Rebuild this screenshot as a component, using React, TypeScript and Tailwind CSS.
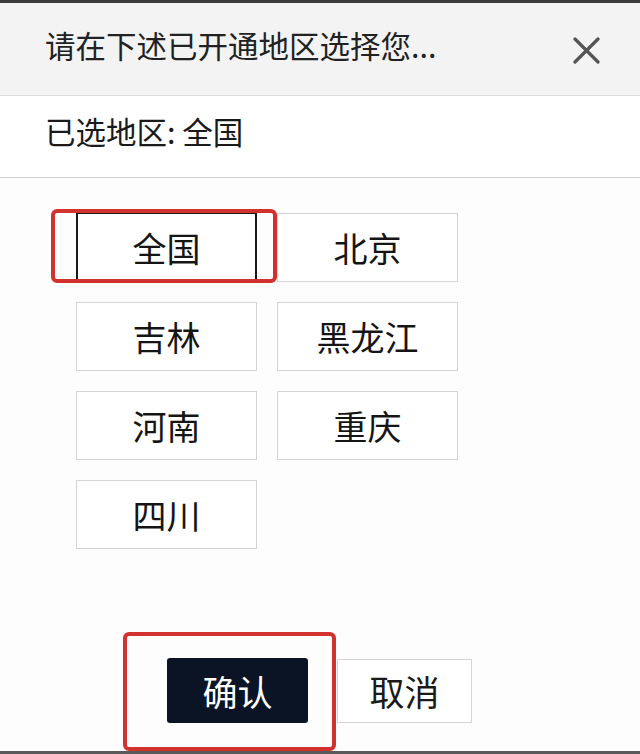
const regions = ["全国", "北京", "吉林", "黑龙江", "河南", "重庆", "四川"];

const App = () => {
  const selected = "全国";

  return (
    <div
      className="w-[640px] h-[754px] flex flex-col bg-[#fdfdfd] text-[#151515] overflow-hidden"
      style={{ fontFamily: '"Noto Sans CJK SC", "Noto Sans", sans-serif' }}
    >
      <div className="h-[3px] bg-[#3c3c3c]" />

      {/* Header */}
      <div className="h-[93px] shrink-0 bg-[#f3f3f3] border-b border-[#dcdcdc] flex items-center justify-between pl-[45px] pr-[40px]">
        <span className="text-[30.5px] leading-none text-[#222] mb-[8px]">请在下述已开通地区选择您...</span>
        <svg width="27" height="27" viewBox="0 0 27 27" className="shrink-0 mt-[2px]">
          <path d="M2 2 L25 25 M25 2 L2 25" stroke="#555" strokeWidth="3.2" strokeLinecap="round" />
        </svg>
      </div>

      {/* Selected */}
      <div className="h-[82px] shrink-0 border-b border-[#cfcfcf] bg-white flex items-center pl-[45px] pb-[10px]">
        <span className="text-[30.5px] leading-none text-[#1a1a1a]">已选地区: 全国</span>
      </div>

      {/* Region grid */}
      <div className="pt-[35px] pl-[76px] grid grid-cols-[181px_181px] gap-x-[20px] gap-y-[20px] auto-rows-[69px]">
        {regions.map((name) => (
          <div key={name} className="relative">
            <button
              className={
                name === selected
                  ? "w-full h-full bg-white border-x-2 border-y border-[#1a1a1a] text-[34px] leading-none"
                  : "w-full h-full bg-white border border-[#d4d4d4] text-[34px] leading-none"
              }
            >
              {name}
            </button>
            {name === selected && (
              <div className="absolute left-[-25px] top-[-4px] w-[226px] h-[74px] border-4 border-[#d2322d] rounded-[6px] pointer-events-none" />
            )}
          </div>
        ))}
      </div>

      <div className="flex-1" />

      {/* Footer */}
      <div className="flex items-center pl-[167px] pb-[28px] gap-[29px]">
        <div className="relative">
          <button className="w-[141px] h-[65px] bg-[#0b1424] text-white text-[35px] leading-none rounded-[3px]">
            确认
          </button>
          <div className="absolute left-[-44px] top-[-26px] w-[213px] h-[119px] border-4 border-[#d2322d] rounded-[6px] pointer-events-none" />
        </div>
        <button className="w-[135px] h-[64px] bg-white border border-[#d4d4d4] text-[35px] leading-none text-[#1a1a1a]">
          取消
        </button>
      </div>

      <div className="h-[3px] bg-[#5a5a5a]" />
    </div>
  );
};

export default App;
